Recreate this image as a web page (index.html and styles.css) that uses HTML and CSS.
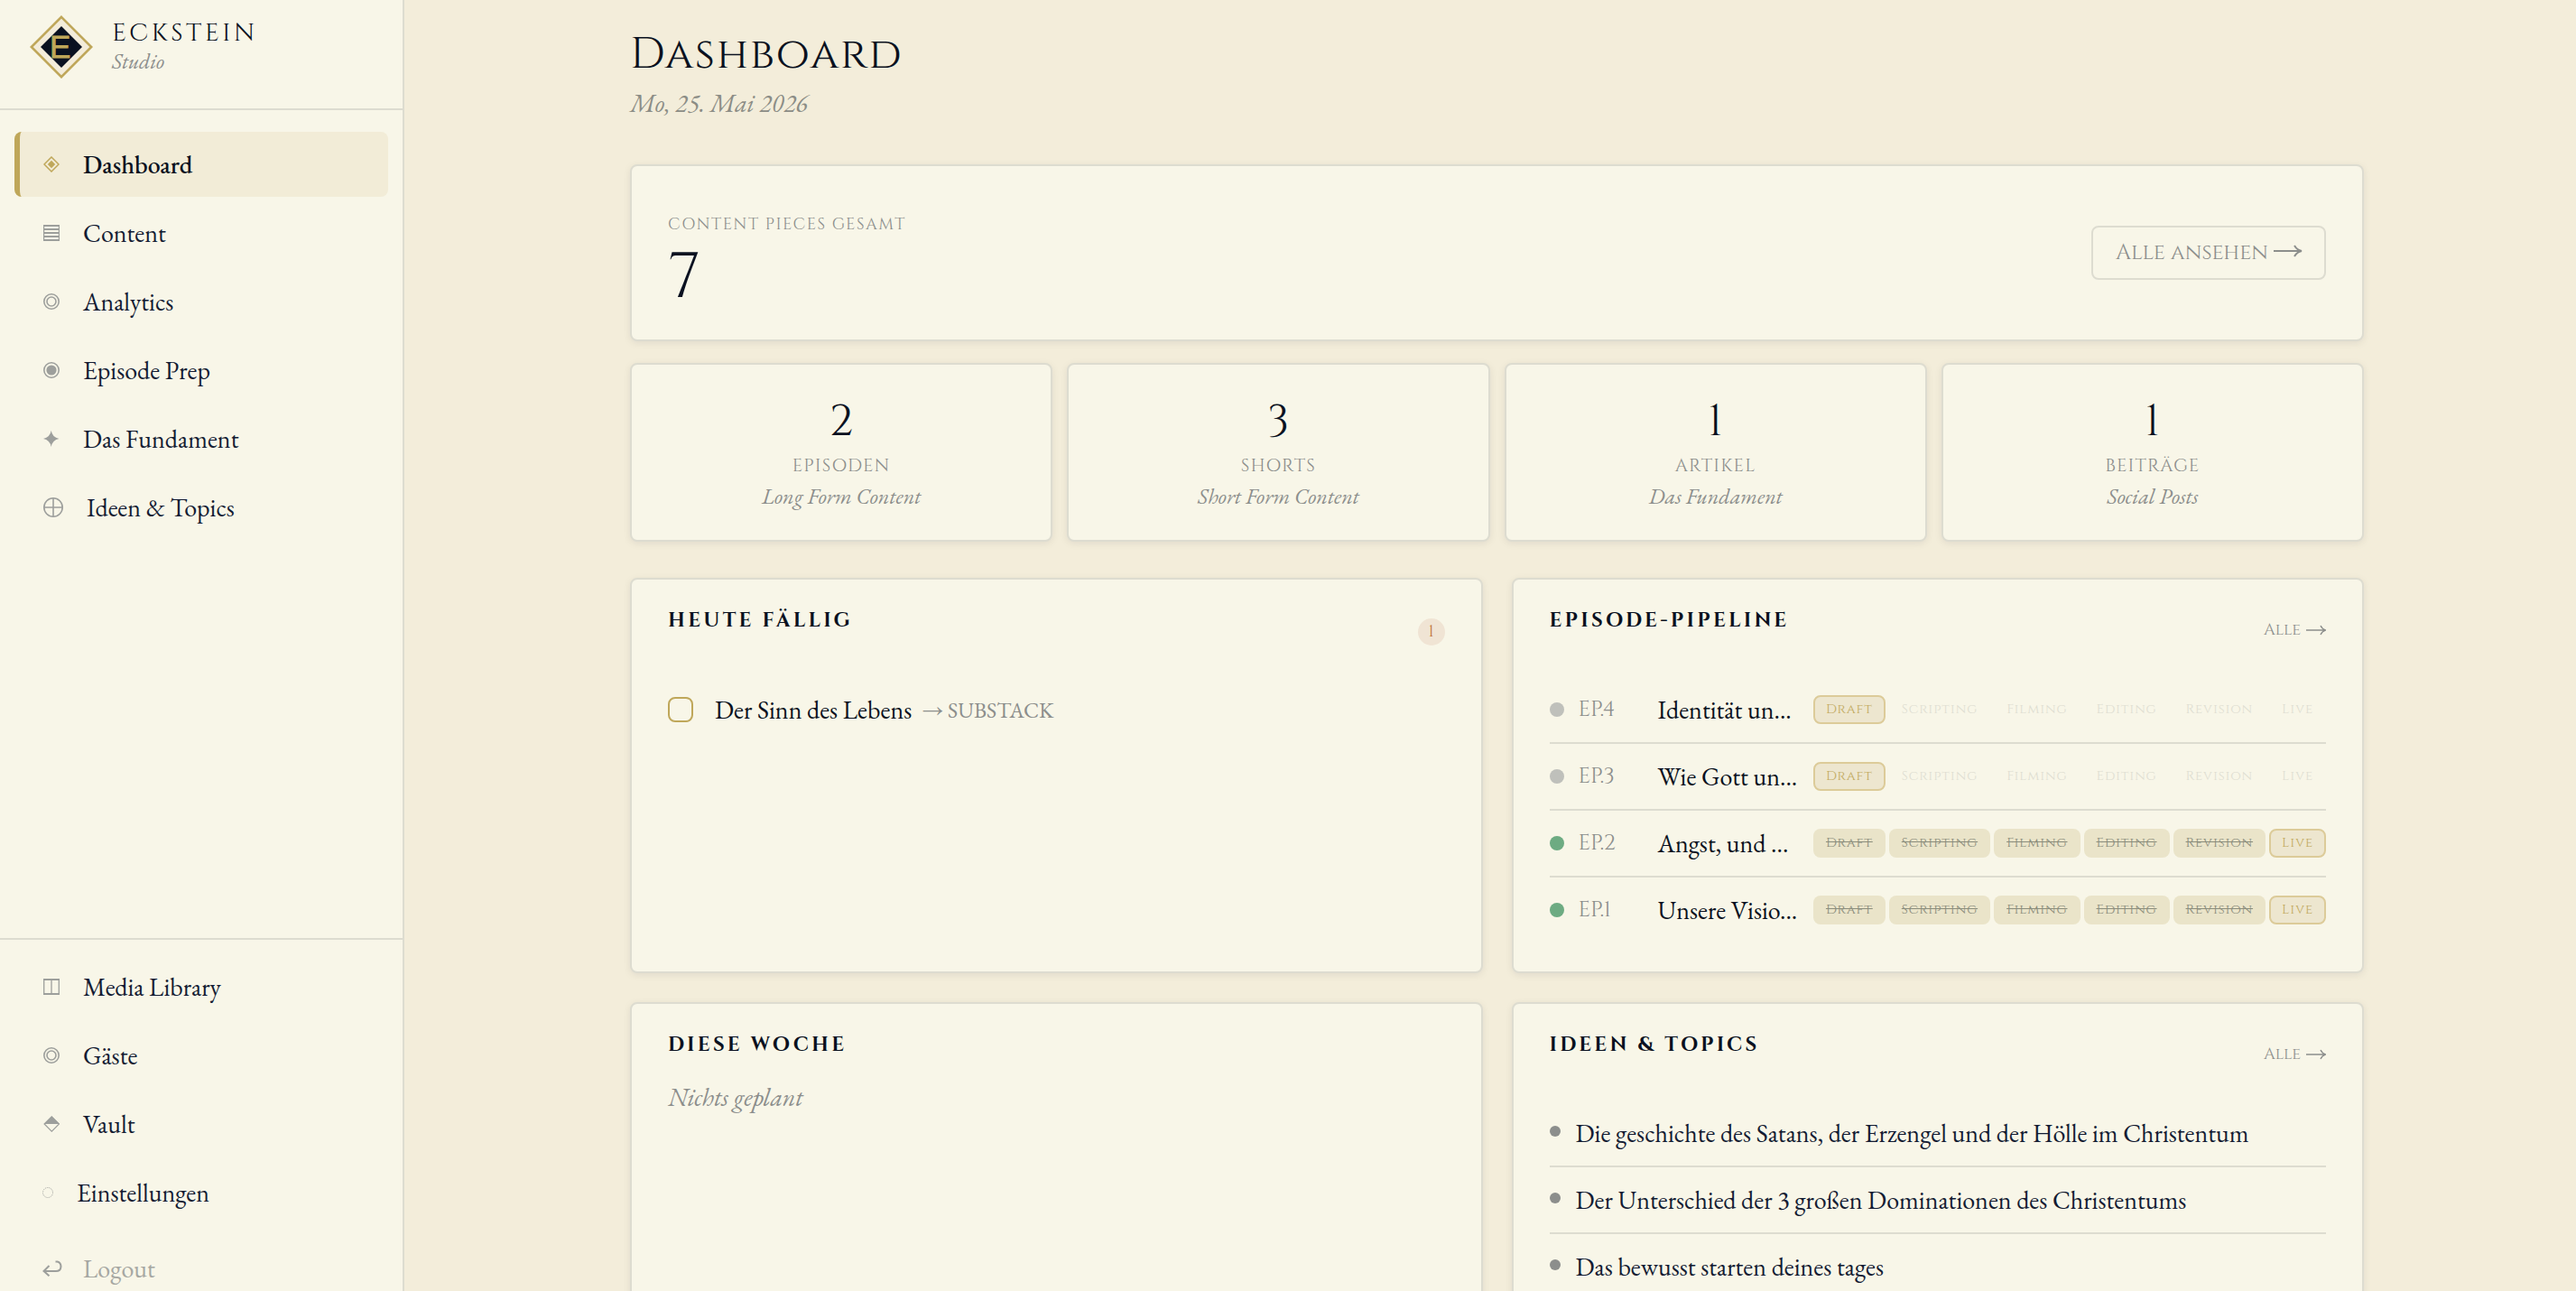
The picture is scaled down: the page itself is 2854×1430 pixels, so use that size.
FILE: index.html
```
<!DOCTYPE html>
<html lang="de">
<head>
  <meta charset="UTF-8" />
  <title>Eckstein Studio – Dashboard</title>
  <link rel="stylesheet" href="styles.css">
</head>
<body>
  <aside class="sidebar">
    <div class="brand">
      <svg class="brand-logo" viewBox="0 0 70 70">
        <path d="M35 1.8 68.2 35 35 68.2 1.8 35Z" fill="#f3ecda" stroke="#bfa75a" stroke-width="2.6"/>
        <path d="M35 12 58 35 35 58 12 35Z" fill="#0a1120"/>
        <text x="22" y="47" class="brand-letter">E</text>
      </svg>
      <div>
        <div class="brand-name">ECKSTEIN</div>
        <div class="brand-sub">Studio</div>
      </div>
    </div>

    <nav class="nav">
      <a class="nav-item active"><svg class="ic" viewBox="0 0 18 18"><path d="M9 1 17 9 9 17 1 9Z" fill="none" stroke="currentColor" stroke-width="1.5"/><path d="M9 4.8 13.2 9 9 13.2 4.8 9Z" fill="currentColor"/></svg>Dashboard</a>
      <a class="nav-item"><svg class="ic" viewBox="0 0 18 18"><path d="M.6 0V18M17.4 0V18" stroke="currentColor" stroke-width="1.2"/><path d="M0 1H18M0 5H18M0 9H18M0 13H18M0 17H18" stroke="currentColor" stroke-width="2"/></svg>Content</a>
      <a class="nav-item"><svg class="ic" viewBox="0 0 18 18"><g fill="none" stroke="currentColor" stroke-width="1.6"><circle cx="9" cy="9" r="8.2"/><circle cx="9" cy="9" r="5"/></g></svg>Analytics</a>
      <a class="nav-item"><svg class="ic" viewBox="0 0 18 18"><circle cx="9" cy="9" r="8.2" fill="none" stroke="currentColor" stroke-width="1.6"/><circle cx="9" cy="9" r="5.6" fill="currentColor"/></svg>Episode Prep</a>
      <a class="nav-item"><svg class="ic" viewBox="0 0 18 18"><path d="M8.7 0Q10 7.4 17.4 9 10 10.4 8.7 18 7.4 10.4 0 9 7.4 7.4 8.7 0Z" fill="currentColor"/></svg>Das Fundament</a>
      <a class="nav-item"><svg class="ic wide" viewBox="0 0 22 22"><path d="M11 1V21M1 11H21" stroke="currentColor" stroke-width="1.6"/><circle cx="11" cy="11" r="10.2" fill="none" stroke="currentColor" stroke-width="1.6"/></svg>Ideen &amp; Topics</a>
    </nav>

    <nav class="nav nav-bottom">
      <a class="nav-item"><svg class="ic" viewBox="0 0 18 18"><path d="M.7 0V18M17.3 0V18M9 0V18" stroke="currentColor" stroke-width="1.3"/><path d="M0 1H18M0 17H18" stroke="currentColor" stroke-width="2"/></svg>Media Library</a>
      <a class="nav-item"><svg class="ic" viewBox="0 0 18 18"><g fill="none" stroke="currentColor" stroke-width="1.6"><circle cx="9" cy="9" r="8.2"/><circle cx="9" cy="9" r="5"/></g></svg>Gäste</a>
      <a class="nav-item"><svg class="ic" viewBox="0 0 18 18"><path d="M9.3 .8 17.5 9 9.3 17.2 1.1 9Z" fill="none" stroke="currentColor" stroke-width="1.2"/><path d="M9.3 .5 18 9H.6Z" fill="currentColor"/></svg>Vault</a>
      <a class="nav-item"><svg class="ic small" viewBox="0 0 12 12"><circle cx="6" cy="6" r="5.5" fill="none" stroke="currentColor" stroke-width="1" stroke-dasharray="1 1"/></svg>Einstellungen</a>
      <a class="nav-item logout"><svg class="ic back" viewBox="0 0 22 18"><path d="M14.5 1.5H16.5C22 3 22 12 15 12H1.5M7.5 6 1.5 12 7.5 17.3" fill="none" stroke="currentColor" stroke-width="2"/></svg>Logout</a>
    </nav>
  </aside>

  <main class="main">
    <h1 class="page-title">Dashboard</h1>
    <p class="page-date">Mo, 25. Mai 2026</p>

    <section class="card total">
      <div class="total-info">
        <div class="label">CONTENT PIECES GESAMT</div>
        <div class="total-value">7</div>
      </div>
      <a class="btn">Alle ansehen<svg class="arrow" viewBox="0 0 32 14"><path d="M0 7H30M23 1Q26 6 31 7 26 8 23 13" fill="none" stroke="currentColor" stroke-width="2"/></svg></a>
    </section>

    <section class="stats">
      <div class="card stat"><div class="stat-value">2</div><div class="label">EPISODEN</div><div class="stat-sub">Long Form Content</div></div>
      <div class="card stat"><div class="stat-value">3</div><div class="label">SHORTS</div><div class="stat-sub">Short Form Content</div></div>
      <div class="card stat"><div class="stat-value">1</div><div class="label">ARTIKEL</div><div class="stat-sub">Das Fundament</div></div>
      <div class="card stat"><div class="stat-value">1</div><div class="label">BEITRÄGE</div><div class="stat-sub">Social Posts</div></div>
    </section>

    <section class="panels">
      <div class="card panel">
        <header class="panel-head"><h2>HEUTE FÄLLIG</h2><span class="badge">1</span></header>
        <div class="task">
          <span class="check"></span>
          <span class="task-title">Der Sinn des Lebens</span>
          <span class="task-target">→ SUBSTACK</span>
        </div>
      </div>

      <div class="card panel">
        <header class="panel-head"><h2>EPISODE-PIPELINE</h2><a class="more">Alle<svg class="arrow-sm" viewBox="0 0 22 12"><path d="M0 6H21M16 1Q18 5 21.5 6 18 7 16 11" fill="none" stroke="currentColor" stroke-width="1.4"/></svg></a></header>
        <div class="episode">
          <span class="dot"></span><span class="ep-no">EP.4</span><span class="ep-title">Identität un...</span>
          <div class="stages"><span class="stage current">Draft</span><span class="stage">Scripting</span><span class="stage">Filming</span><span class="stage">Editing</span><span class="stage">Revision</span><span class="stage">Live</span></div>
        </div>
        <div class="episode">
          <span class="dot"></span><span class="ep-no">EP.3</span><span class="ep-title">Wie Gott un...</span>
          <div class="stages"><span class="stage current">Draft</span><span class="stage">Scripting</span><span class="stage">Filming</span><span class="stage">Editing</span><span class="stage">Revision</span><span class="stage">Live</span></div>
        </div>
        <div class="episode">
          <span class="dot live"></span><span class="ep-no">EP.2</span><span class="ep-title">Angst, und ...</span>
          <div class="stages"><span class="stage done">Draft</span><span class="stage done">Scripting</span><span class="stage done">Filming</span><span class="stage done">Editing</span><span class="stage done">Revision</span><span class="stage current">Live</span></div>
        </div>
        <div class="episode">
          <span class="dot live"></span><span class="ep-no">EP.1</span><span class="ep-title">Unsere Visio...</span>
          <div class="stages"><span class="stage done">Draft</span><span class="stage done">Scripting</span><span class="stage done">Filming</span><span class="stage done">Editing</span><span class="stage done">Revision</span><span class="stage current">Live</span></div>
        </div>
      </div>

      <div class="card panel">
        <header class="panel-head short"><h2>DIESE WOCHE</h2></header>
        <p class="empty">Nichts geplant</p>
      </div>

      <div class="card panel">
        <header class="panel-head"><h2>IDEEN &amp; TOPICS</h2><a class="more">Alle<svg class="arrow-sm" viewBox="0 0 22 12"><path d="M0 6H21M16 1Q18 5 21.5 6 18 7 16 11" fill="none" stroke="currentColor" stroke-width="1.4"/></svg></a></header>
        <ul class="ideas">
          <li>Die geschichte des Satans, der Erzengel und der Hölle im Christentum</li>
          <li>Der Unterschied der 3 großen Dominationen des Christentums</li>
          <li>Das bewusst starten deines tages</li>
        </ul>
      </div>
    </section>
  </main>
</body>
</html>
```
FILE: styles.css
```
* { box-sizing: border-box; }
html { height: 100%; overflow: hidden; }
body {
  margin: 0;
  height: 100vh;
  overflow: hidden;
  display: flex;
  background: #f3edda;
  color: #0a1120;
  font-family: 'EB Garamond', 'Liberation Serif', serif;
}
h1, h2, p, ul { margin: 0; padding: 0; font-weight: 400; }

.brand-name, .page-title, .label, .total-value, .stat-value, .btn,
.panel-head h2, .badge, .more, .ep-no, .stage {
  font-family: Cinzel, 'EB Garamond', 'Liberation Serif', serif;
}

/* sidebar */
.sidebar {
  flex: 0 0 448px;
  height: 1430px;
  display: flex;
  flex-direction: column;
  background: #f8f6e8;
  border-right: 2px solid #dddcd0;
}
.brand {
  height: 122px;
  flex: none;
  display: flex;
  gap: 21px;
  padding: 17px 0 0 33px;
  border-bottom: 2px solid #dddcd0;
}
.brand-logo { width: 70px; height: 70px; }
.brand-letter {
  font: 35px 'Liberation Sans', sans-serif;
  fill: #bfa75a; stroke: #bfa75a; stroke-width: 0.8px;
}
.brand-name { font-size: 28px; line-height: 34px; letter-spacing: 3.36px; margin-top: 3px; }
.brand-sub { font-size: 24px; line-height: 28px; font-style: italic; color: #8c8e8c; }

.nav { padding: 24px 16px 0; display: flex; flex-direction: column; gap: 4px; }
.nav-bottom { margin-top: auto; border-top: 2px solid #dddcd0; padding: 16px 16px 0; height: 391px; }
.nav-item {
  height: 72px; flex: none;
  display: flex; align-items: center; gap: 26px;
  padding: 0 0 0 26px;
  border-left: 6px solid transparent;
  border-radius: 8px;
  font-size: 28px; line-height: 34px;
  color: #141c33;
}
.nav-item.active { background: #f2ecd7; border-left-color: #bfa75a; color: #0a1120; font-weight: 500; }
.nav-item.active .ic { color: #bfa75a; }
.nav-item.logout { margin-top: 8px; color: #a6a7a2; }
.ic { width: 18px; height: 18px; flex: none; color: #9d9f9c; }
.ic.wide { width: 22px; height: 22px; }
.ic.small { width: 12px; height: 12px; margin-left: -1px; }
.ic.back { width: 22px; height: 18px; margin: 0 -3px 0 -1px; }

/* main */
.main { width: 1921px; margin-left: 250px; flex: none; }
.page-title { font-size: 48px; line-height: 56px; letter-spacing: 1.44px; margin-top: 33px; }
.page-date { font-size: 28px; line-height: 34px; font-style: italic; color: #8c8d86; margin-top: 8px; }

.card {
  background: #f8f6e8;
  border: 2px solid #dddcd0;
  border-radius: 8px;
  box-shadow: 0 2px 8px rgba(10, 17, 32, 0.08);
}
.label { font-size: 18px; line-height: 24px; letter-spacing: 1.5px; color: #8c8e8c; }

.total {
  height: 196px; margin-top: 51px; padding: 0 40px;
  display: flex; align-items: center; justify-content: space-between;
}
.total-info { padding-top: 22px; }
.total-value { font-size: 72px; line-height: 76px; margin-top: 9px; }
.btn {
  width: 260px; height: 60px; padding-left: 25px;
  display: flex; align-items: center; gap: 6px;
  border: 2px solid #dddcd0; border-radius: 8px;
  font-size: 24px; line-height: 30px; white-space: nowrap; color: #8c8e8c;
}
.arrow { width: 32px; height: 14px; margin-top: -4px; }

.stats { display: grid; grid-template-columns: repeat(4, 1fr); gap: 16px; margin-top: 24px; }
.stat { height: 198px; padding-top: 39px; text-align: center; }
.stat-value { font-size: 48px; line-height: 50px; }
.stat .label { font-size: 20px; letter-spacing: 1.2px; margin-top: 11px; }
.stat-sub { font-size: 24px; line-height: 28px; margin-top: 8px; font-style: italic; color: #8c8e8c; }

.panels { display: grid; grid-template-columns: 1fr 1fr; gap: 32px; margin-top: 40px; }
.panel { height: 438px; padding: 30px 40px 0; }
.panel-head { height: 78px; display: flex; justify-content: space-between; align-items: flex-start; }
.panel-head.short { height: 56px; }
.panel-head h2 { font-size: 22px; line-height: 31px; font-weight: 600; letter-spacing: 3.25px; }
.badge {
  width: 30px; height: 30px; margin-top: 13px;
  border-radius: 50%; background: #f0e4d4; color: #c1743a;
  font-size: 18px; line-height: 29px; text-align: center;
}
.more { display: flex; align-items: center; gap: 6px; margin-top: 16px; font-size: 18px; line-height: 20px; color: #8c8e8c; }
.arrow-sm { width: 22px; height: 12px; }

.task { height: 72px; display: flex; align-items: center; font-size: 28px; line-height: 34px; }
.check { width: 28px; height: 28px; border: 2px solid #bfa75a; border-radius: 8px; margin-right: 24px; }
.task-target { font-size: 24px; margin-left: 11px; padding-top: 2px; color: #8c8e8c; }

.episode { height: 74px; display: flex; align-items: center; border-bottom: 2px solid #dddcd0; }
.episode:last-child { border-bottom: none; height: 72px; }
.dot { width: 16px; height: 16px; border-radius: 50%; background: #bfc0bb; margin-right: 16px; }
.dot.live { background: #6dab82; }
.ep-no { width: 88px; font-size: 24px; line-height: 30px; letter-spacing: -0.2px; color: #8c8e8c; }
.ep-title { width: 156px; font-size: 28px; line-height: 34px; white-space: nowrap; }
.stages { display: flex; gap: 4px; margin-left: auto; }
.stage {
  height: 32px; border-radius: 8px; padding: 0 12px;
  border: 2px solid transparent;
  font-size: 15px; line-height: 28px; letter-spacing: 0.83px; color: #dfded2;
}
.stage.done { background: #eae4c9; color: #8b8d7c; text-decoration: line-through; }
.stage.current { background: #ede6cf; border-color: #dccb99; color: #c2aa5f; }

.empty { font-size: 28px; line-height: 34px; font-style: italic; color: #8c8e8c; }

.ideas { list-style: none; margin-top: -1px; }
.ideas li {
  height: 74px; display: flex; align-items: center;
  border-bottom: 2px solid #dddcd0;
  font-size: 28px; line-height: 34px; color: #141c33;
  white-space: nowrap;
}
.ideas li::before {
  content: ''; width: 12px; height: 12px; margin: -4px 17px 0 0;
  border-radius: 50%; background: #8c8e8c;
}
```
